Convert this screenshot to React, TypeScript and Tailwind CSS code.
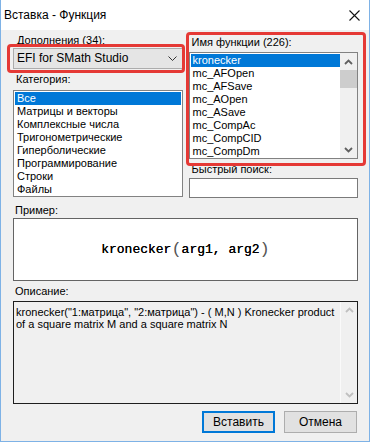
import React from 'react';

const categories = [
  'Все',
  'Матрицы и векторы',
  'Комплексные числа',
  'Тригонометрические',
  'Гиперболические',
  'Программирование',
  'Строки',
  'Файлы',
];

const functions = [
  'kronecker',
  'mc_AFOpen',
  'mc_AFSave',
  'mc_AOpen',
  'mc_ASave',
  'mc_CompAc',
  'mc_CompCID',
  'mc_CompDm',
];

const Arrow: React.FC<{ up?: boolean; color?: string }> = ({ up, color = '#606060' }) => (
  <svg width="9" height="6" viewBox="0 0 9 6">
    <polyline
      points={up ? '1,5 4.5,1.5 8,5' : '1,1 4.5,4.5 8,1'}
      fill="none"
      stroke={color}
      strokeWidth="1.8"
    />
  </svg>
);

const App: React.FC = () => {
  return (
    <div
      className="relative w-[370px] h-[442px] flex flex-col bg-[#f0f0f0] border-x border-b border-[#7eb2e6] text-[11px] leading-[13px] text-black overflow-hidden"
      style={{ fontFamily: '"Liberation Sans", Arial, sans-serif' }}
    >
      {/* title bar */}
      <div className="h-[30px] bg-white flex items-center justify-between pl-[4px] pr-[10px] -mx-px">
        <span className="text-[12px]">Вставка - Функция</span>
        <svg width="11" height="11" viewBox="0 0 11 11">
          <path d="M0.5 0.5 L10.5 10.5 M10.5 0.5 L0.5 10.5" stroke="#111" strokeWidth="1.1" />
        </svg>
      </div>

      <div className="flex-1 flex flex-col pl-[12px] pr-[11px]">
        <div className="grid grid-cols-2 gap-[6px]">
          {/* left column */}
          <div className="flex flex-col">
            <div className="pt-[4px] pl-[4px]">Дополнения (34):</div>
            <div className="mt-[1px] h-[21px] bg-[#e5e5e5] border border-[#acacac] flex items-center justify-between pl-[3px] pr-[5px]">
              <span className="text-[12px]">EFI for SMath Studio</span>
              <svg width="9" height="6" viewBox="0 0 9 6">
                <polyline points="0.5,0.5 4.5,4.5 8.5,0.5" fill="none" stroke="#333" strokeWidth="1" />
              </svg>
            </div>
            <div className="mt-[4px] pl-[3px]">Категория:</div>
            <div className="mt-[4px] h-[107px] bg-white border border-[#828282] p-px">
              {categories.map((c, i) => (
                <div
                  key={c}
                  className={`h-[13px] pl-[2px] ${i === 0 ? 'bg-[#0078d7] text-white' : ''}`}
                >
                  {c}
                </div>
              ))}
            </div>
          </div>

          {/* right column */}
          <div className="flex flex-col">
            <div className="pt-[6px] pl-[3px]">Имя функции (226):</div>
            <div className="mt-[3px] h-[107px] bg-white border border-[#828282] flex">
              <div className="flex-1 pt-px pl-px">
                {functions.map((f, i) => (
                  <div
                    key={f}
                    className={`h-[13px] pl-[2px] ${i === 0 ? 'bg-[#0078d7] text-white' : ''}`}
                  >
                    {f}
                  </div>
                ))}
              </div>
              <div className="w-[17px] bg-[#f0f0f0] flex flex-col items-center">
                <div className="h-[17px] flex items-center justify-center">
                  <Arrow up />
                </div>
                <div className="w-full h-[18px] bg-[#cdcdcd]" />
                <div className="flex-1" />
                <div className="h-[17px] flex items-center justify-center">
                  <Arrow />
                </div>
              </div>
            </div>
            <div className="mt-[4px] pl-[3px]">Быстрый поиск:</div>
            <div className="mt-[2px] h-[20px] bg-white border border-[#7a7a7a]" />
          </div>
        </div>

        <div className="mt-[6px] pl-[2px]">Пример:</div>
        <div className="mt-px h-[63px] bg-white border border-[#646464] flex items-center justify-center">
          <span
            className="text-[13px] text-black flex items-center [text-shadow:0_0_0.5px_#000]"
            style={{ fontFamily: '"Liberation Mono", "Courier New", monospace' }}
          >
            kronecker
            <span className="text-[17px] text-[#555] [text-shadow:none]">(</span>
            arg1, arg2
            <span className="text-[17px] text-[#555] [text-shadow:none]">)</span>
          </span>
        </div>

        <div className="mt-[4px] pl-[2px]">Описание:</div>
        <div className="mt-[3px] h-[103px] border border-[#1e1e1e] flex">
          <div className="flex-1 pt-[4px] pl-[2px] text-[11px] leading-[12px] whitespace-nowrap">
            <div>kronecker("1:матрица", "2:матрица") - ( M,N ) Kronecker product</div>
            <div>of a square matrix M and a square matrix N</div>
          </div>
          <div className="w-[17px] border-l border-[#fafafa] flex flex-col items-center justify-between py-[5px]">
            <Arrow up color="#c0c0c0" />
            <Arrow color="#c0c0c0" />
          </div>
        </div>

        <div className="mt-[7px] flex justify-end gap-[9px] pr-px">
          <button className="w-[73px] h-[22px] bg-[#e1e1e1] border-2 border-[#0078d7] text-[12px]">
            Вставить
          </button>
          <button className="w-[73px] h-[22px] bg-[#e1e1e1] border border-[#adadad] text-[12px]">
            Отмена
          </button>
        </div>
      </div>

      {/* red highlight frames */}
      <div className="absolute left-[6px] top-[44px] w-[178px] h-[29px] border-[3px] border-[#e53935] rounded-[4px]" />
      <div className="absolute left-[185px] top-[32px] w-[180px] h-[134px] border-[3px] border-[#e53935] rounded-[4px]" />
    </div>
  );
};

export default App;
